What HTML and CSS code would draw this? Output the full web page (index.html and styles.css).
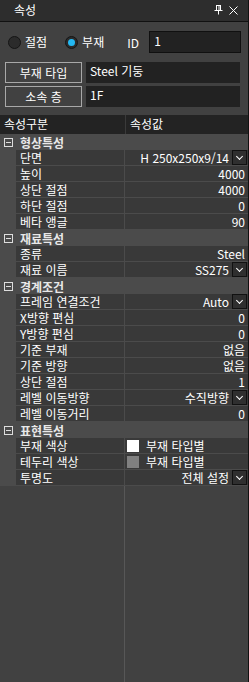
FILE: index.html
```html
<!DOCTYPE html>
<html lang="ko">
  <head>
    <meta charset="UTF-8" />
    <meta name="viewport" content="width=device-width, initial-scale=1.0" />
    <title>속성</title>
    <link rel="stylesheet" href="styles.css">
  </head>
  <body>
    <div class="panel">
      <div class="titlebar">
        <span class="title">속성</span>
        <div class="tools">
          <svg width="9" height="10" viewBox="0 0 9 10">
            <path d="M2 0.5h5M2.5 0.5v5M6.5 0.5v5M5 0.5v5M0.5 5.5h8M4.5 5.5v4" stroke="#fff" stroke-width="1" fill="none" />
          </svg>
          <svg width="9" height="9" viewBox="0 0 9 9">
            <path d="M0.5 0.5l8 8M8.5 0.5l-8 8" stroke="#fff" stroke-width="1" fill="none" />
          </svg>
        </div>
      </div>

      <div class="body">
        <div class="pick-row">
          <label class="radio"><span class="dot"></span>절점</label>
          <label class="radio on"><span class="dot"></span>부재</label>
          <span class="id-label">ID</span>
          <div class="id-input">1</div>
        </div>

        <div class="field-row">
          <button class="btn">부재 타입</button>
          <div class="field">Steel 기둥</div>
        </div>
        <div class="field-row">
          <button class="btn">소속 층</button>
          <div class="field">1F</div>
        </div>

        <div class="table">
          <div class="thead">
            <div class="th">속성구분</div>
            <div class="th">속성값</div>
          </div>

          <div class="group"><span class="toggle"></span>형상특성</div>
          <div class="row"><div class="name">단면</div><div class="val drop">H 250x250x9/14<span class="arrow"></span></div></div>
          <div class="row"><div class="name">높이</div><div class="val">4000</div></div>
          <div class="row"><div class="name">상단 절점</div><div class="val">4000</div></div>
          <div class="row"><div class="name">하단 절점</div><div class="val">0</div></div>
          <div class="row"><div class="name">베타 앵글</div><div class="val">90</div></div>

          <div class="group"><span class="toggle"></span>재료특성</div>
          <div class="row"><div class="name">종류</div><div class="val">Steel</div></div>
          <div class="row"><div class="name">재료 이름</div><div class="val drop">SS275<span class="arrow"></span></div></div>

          <div class="group"><span class="toggle"></span>경계조건</div>
          <div class="row"><div class="name">프레임 연결조건</div><div class="val drop">Auto<span class="arrow"></span></div></div>
          <div class="row"><div class="name">X방향 편심</div><div class="val">0</div></div>
          <div class="row"><div class="name">Y방향 편심</div><div class="val">0</div></div>
          <div class="row"><div class="name">기준 부재</div><div class="val">없음</div></div>
          <div class="row"><div class="name">기준 방향</div><div class="val">없음</div></div>
          <div class="row"><div class="name">상단 절점</div><div class="val">1</div></div>
          <div class="row"><div class="name">레벨 이동방향</div><div class="val drop">수직방향<span class="arrow"></span></div></div>
          <div class="row"><div class="name">레벨 이동거리</div><div class="val">0</div></div>

          <div class="group"><span class="toggle"></span>표현특성</div>
          <div class="row"><div class="name">부재 색상</div><div class="val color"><span class="swatch white"></span>부재 타입별</div></div>
          <div class="row"><div class="name">테두리 색상</div><div class="val color"><span class="swatch gray"></span>부재 타입별</div></div>
          <div class="row"><div class="name">투명도</div><div class="val drop">전체 설정<span class="arrow"></span></div></div>

          <div class="filler">
            <div></div>
            <div class="filler-right"></div>
          </div>
        </div>
      </div>
    </div>
  </body>
</html>
```

FILE: styles.css
```css
* {
  margin: 0;
  padding: 0;
  box-sizing: border-box;
}
body {
  background-color: #414141;
  font-family: "Noto Sans CJK KR", "DejaVu Sans", sans-serif;
  font-size: 12px;
  color: #fff;
}

.panel {
  width: 249px;
  height: 682px;
  display: flex;
  flex-direction: column;
  border-right: 1px solid #111;
}

.titlebar {
  height: 22px;
  background-color: #2d2d2d;
  border-bottom: 1px solid #111;
  display: flex;
  align-items: center;
  justify-content: space-between;
  padding: 0 10px 1px 14px;
}

.titlebar .title {
  line-height: 16px;
}

.tools {
  display: flex;
  align-items: center;
  gap: 6px;
}

.body {
  flex: 1;
  display: flex;
  flex-direction: column;
  background-color: #414141;
}

.pick-row {
  display: flex;
  align-items: center;
  height: 22px;
  margin-top: 9px;
  padding-left: 8px;
}

.radio {
  display: flex;
  align-items: center;
  gap: 4px;
  margin-right: 18px;
  line-height: 14px;
}

.radio .dot {
  width: 13px;
  height: 13px;
  border-radius: 50%;
  background-color: #2b2b2b;
  border: 1px solid #151515;
  display: flex;
  align-items: center;
  justify-content: center;
}

.radio.on .dot::after {
  content: "";
  width: 7px;
  height: 7px;
  border-radius: 50%;
  background-color: #24b8f2;
}

.id-label {
  margin-left: 5px;
  width: 22px;
}

.id-input {
  width: 92px;
  height: 22px;
  background-color: #222;
  border: 1px solid #101010;
  padding: 1px 4px;
  line-height: 16px;
}

.field-row {
  display: flex;
  gap: 4px;
  padding-left: 5px;
  margin-top: 9px;
}
.field-row + .field-row {
  margin-top: 3px;
}

.btn {
  width: 77px;
  height: 21px;
  background-color: #414141;
  border: 1px solid #a8a8a8;
  color: #fff;
  font-family: inherit;
  font-size: 12px;
}

.field {
  width: 154px;
  height: 21px;
  background-color: #222;
  padding: 0 4px;
  line-height: 17px;
}

.table {
  flex: 1;
  display: flex;
  flex-direction: column;
  margin-top: 8px;
}

.thead {
  display: flex;
  height: 19px;
  background-color: #232323;
}

.th {
  line-height: 18px;
  padding-left: 4px;
}
.th:first-child {
  width: 126px;
  border-right: 1px solid #3a3a3a;
}

.group {
  height: 16px;
  background-color: #4b4b4b;
  font-weight: bold;
  color: #e8e8e8;
  display: flex;
  align-items: center;
  padding-left: 4px;
  line-height: 15px;
}

.toggle {
  width: 9px;
  height: 9px;
  border: 1px solid #ddd;
  margin-right: 7px;
  display: flex;
  align-items: center;
  justify-content: center;
}
.toggle::after {
  content: "";
  width: 5px;
  height: 1px;
  background-color: #ddd;
}

.row {
  display: flex;
  height: 16px;
  padding: 0 0 1px 16px;
  background-color: #4b4b4b;
  gap: 1px;
}

.name,
.val {
  background-color: #393939;
  line-height: 15px;
}

.name {
  width: 108px;
  padding-left: 4px;
}

.val {
  flex: 1;
  text-align: right;
  padding-right: 3px;
  display: flex;
  justify-content: flex-end;
  align-items: center;
}

.val.drop {
  padding-right: 1px;
}

.arrow {
  width: 15px;
  height: 15px;
  margin-left: 3px;
  border: 1px solid #111;
  background-color: #2f2f2f;
  display: flex;
  align-items: center;
  justify-content: center;
}
.arrow::after {
  content: "";
  width: 4px;
  height: 4px;
  border-right: 1px solid #fff;
  border-bottom: 1px solid #fff;
  transform: translateY(-1px) rotate(45deg);
}

.val.color {
  justify-content: flex-start;
  padding-left: 2px;
}

.swatch {
  width: 12px;
  height: 12px;
  margin-right: 7px;
}
.swatch.white {
  background-color: #fff;
}
.swatch.gray {
  background-color: #808080;
}

.filler {
  flex: 1;
  display: flex;
  background-color: #414141;
}
.filler > div:first-child {
  width: 124px;
}
.filler-right {
  flex: 1;
  border-left: 1px solid #575757;
}
```
